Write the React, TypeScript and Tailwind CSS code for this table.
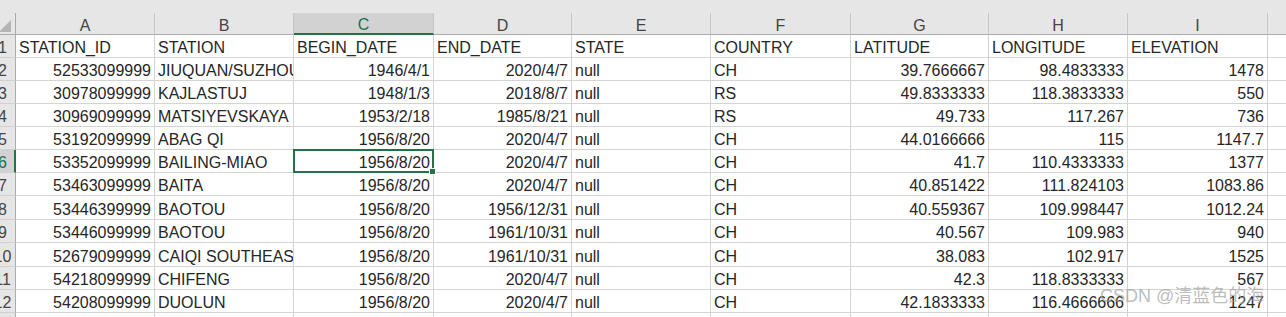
import React from 'react';

const columns = ['A', 'B', 'C', 'D', 'E', 'F', 'G', 'H', 'I'];

// r = right aligned (numbers, dates), l = left aligned (text)
const align = ['r', 'l', 'r', 'r', 'l', 'l', 'r', 'r', 'r'];

const header = ['STATION_ID', 'STATION', 'BEGIN_DATE', 'END_DATE', 'STATE', 'COUNTRY', 'LATITUDE', 'LONGITUDE', 'ELEVATION'];

const rows = [
  ['52533099999', 'JIUQUAN/SUZHOU', '1946/4/1', '2020/4/7', 'null', 'CH', '39.7666667', '98.4833333', '1478'],
  ['30978099999', 'KAJLASTUJ', '1948/1/3', '2018/8/7', 'null', 'RS', '49.8333333', '118.3833333', '550'],
  ['30969099999', 'MATSIYEVSKAYA', '1953/2/18', '1985/8/21', 'null', 'RS', '49.733', '117.267', '736'],
  ['53192099999', 'ABAG QI', '1956/8/20', '2020/4/7', 'null', 'CH', '44.0166666', '115', '1147.7'],
  ['53352099999', 'BAILING-MIAO', '1956/8/20', '2020/4/7', 'null', 'CH', '41.7', '110.4333333', '1377'],
  ['53463099999', 'BAITA', '1956/8/20', '2020/4/7', 'null', 'CH', '40.851422', '111.824103', '1083.86'],
  ['53446399999', 'BAOTOU', '1956/8/20', '1956/12/31', 'null', 'CH', '40.559367', '109.998447', '1012.24'],
  ['53446099999', 'BAOTOU', '1956/8/20', '1961/10/31', 'null', 'CH', '40.567', '109.983', '940'],
  ['52679099999', 'CAIQI SOUTHEAST', '1956/8/20', '1961/10/31', 'null', 'CH', '38.083', '102.917', '1525'],
  ['54218099999', 'CHIFENG', '1956/8/20', '2020/4/7', 'null', 'CH', '42.3', '118.8333333', '567'],
  ['54208099999', 'DUOLUN', '1956/8/20', '2020/4/7', 'null', 'CH', '42.1833333', '116.4666666', '1247'],
];

const gridCols = 'grid grid-cols-[16px_139px_139px_140px_138px_139px_140px_138px_139px_140px_1fr]';

const RowHeader = ({ n, active }: { n: number; active?: boolean }) => (
  <div
    className={
      active
        ? 'flex items-end overflow-hidden border-b border-r-2 border-b-[#d0d0d0] border-r-[#217346] bg-[#d2d2d2] leading-[16px] text-[#217346]'
        : 'flex items-end overflow-hidden border-b border-r border-b-[#d0d0d0] border-r-[#ababab] bg-[#e6e6e6] leading-[16px] text-[#444]'
    }
  >
    <div className="-ml-[25px] w-[55px] shrink-0 pb-[1px] text-center">{n}</div>
  </div>
);

const Cell = ({ value, right, selected }: { value: string; right?: boolean; selected?: boolean }) => (
  <div
    className={
      'flex items-end whitespace-nowrap border-b border-r border-[#d4d4d4] pb-[1px] leading-[16px] ' +
      (right ? 'justify-end pr-[3px] ' : 'pl-[3px] ') +
      (selected ? 'relative' : 'overflow-hidden')
    }
  >
    <span>{value}</span>
    {selected && (
      <div className="absolute -top-[1px] -left-[1px] -right-[1px] -bottom-[1px] z-10 border-2 border-[#217346]">
        <div className="absolute -right-[4px] -bottom-[4px] h-[7px] w-[7px] border border-white bg-[#217346]" />
      </div>
    )}
  </div>
);

export default function App() {
  const heights = ['h-[23px]', 'h-[23px]', 'h-[23px]', 'h-[23px]', 'h-[23px]', 'h-[23px]', 'h-[24px]', 'h-[23px]', 'h-[24px]', 'h-[23px]', 'h-[23px]', 'h-[23px]'];

  return (
    <div className="relative h-[317px] w-[1286px] overflow-hidden bg-white text-[16px] text-[#262626] font-['Liberation_Sans',Arial,sans-serif]">
      <div className="h-[13px] bg-[#e6e6e6]" />

      {/* column letters */}
      <div className={gridCols + ' h-[22px] bg-[#e6e6e6]'}>
        <div className="flex items-end justify-end border-b border-r border-[#ababab] pr-[4px] pb-[2px]">
          <svg width="12" height="12" viewBox="0 0 12 12" className="-ml-[8px]">
            <polygon points="0,12 12,12 12,0" fill="#b4b4b4" />
          </svg>
        </div>
        {columns.map((c) =>
          c === 'C' ? (
            <div key={c} className="flex items-end justify-center border-b-2 border-r border-b-[#217346] border-r-[#c6c6c6] bg-[#d2d2d2] leading-[16px] text-[#217346]">
              {c}
            </div>
          ) : (
            <div key={c} className="flex items-end justify-center border-b border-r border-b-[#ababab] border-r-[#c6c6c6] leading-[16px] text-[#444]">
              {c}
            </div>
          )
        )}
        <div className="border-b border-[#ababab]" />
      </div>

      {/* row 1: field names */}
      <div className={gridCols + ' h-[23px]'}>
        <RowHeader n={1} />
        {header.map((h) => (
          <Cell key={h} value={h} />
        ))}
        <div className="border-b border-[#d4d4d4]" />
      </div>

      {rows.map((r, i) => (
        <div key={i} className={gridCols + ' ' + heights[i]}>
          <RowHeader n={i + 2} active={i + 2 === 6} />
          {r.map((v, j) => (
            <Cell key={j} value={v} right={align[j] === 'r'} selected={i + 2 === 6 && j === 2} />
          ))}
          <div className="border-b border-[#d4d4d4]" />
        </div>
      ))}

      <div className={gridCols + ' h-[24px]'}>
        <RowHeader n={13} />
        {columns.map((c) => (
          <Cell key={c} value="" />
        ))}
        <div />
      </div>

      {/* watermark */}
      <div className="absolute left-[1100px] top-[285px] z-20 text-[18px] leading-[22px] text-[#a0a0a0]/70 font-['Liberation_Sans','Noto_Sans_CJK_SC',sans-serif]">
        CSDN @清蓝色的海
      </div>
    </div>
  );
}
